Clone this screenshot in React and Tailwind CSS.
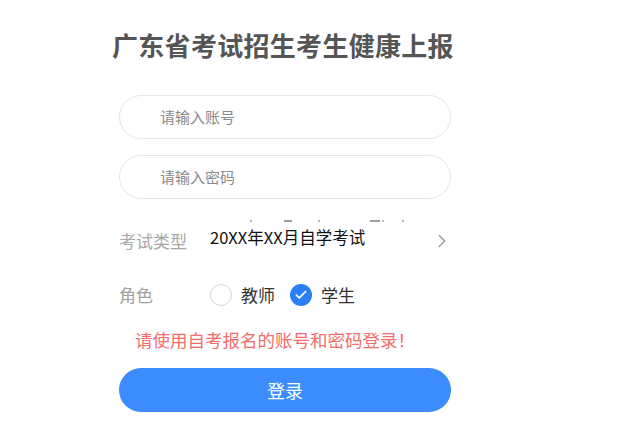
import { Check, ChevronRight } from "lucide-react";

const FONT = { fontFamily: '"Noto Sans CJK SC", "Noto Sans", sans-serif' };

function TextField({ placeholder, type = "text" }) {
  return (
    <div className="h-[44px] w-[332px] rounded-full border border-[#e6e6e6] bg-white flex items-center pl-[40px]">
      <input
        type={type}
        placeholder={placeholder}
        className="w-full bg-transparent text-[15px] text-[#333] placeholder:text-[#8a8a8a] outline-none"
        style={FONT}
      />
    </div>
  );
}

export default function App() {
  return (
    <div className="w-[640px] h-[429px] bg-white overflow-hidden" style={FONT}>
      <div className="w-[332px] ml-[119px] flex flex-col">
        {/* Title */}
        <h1 className="mt-[26px] -ml-[7px] text-[26px] leading-[38px] font-bold text-[#555] tracking-[0.3px] whitespace-nowrap">
          广东省考试招生考生健康上报
        </h1>

        {/* Account / password */}
        <div className="mt-[31px] flex flex-col gap-[16px]">
          <TextField placeholder="请输入账号" />
          <TextField placeholder="请输入密码" type="password" />
        </div>

        {/* Exam type (picker remnants above) */}
        <div className="mt-[20px] h-[3px] flex items-end">
          <span className="ml-[131px] w-[2px] h-[2px] bg-[#b5b5b5]" />
          <span className="ml-[32px] w-[8px] h-[2px] bg-[#a0a0a0]" />
          <span className="ml-[26px] w-[2px] h-[2px] bg-[#b5b5b5]" />
          <span className="ml-[50px] w-[10px] h-[2px] bg-[#a0a0a0]" />
          <span className="ml-[2px] w-[2px] h-[2px] bg-[#c0c0c0]" />
          <span className="ml-[18px] w-[2px] h-[2px] bg-[#b5b5b5]" />
        </div>
        <div className="mt-[2px] flex items-center h-[28px]">
          <span className="w-[91px] text-[17px] text-[#a8a8a8] mt-[6px]">考试类型</span>
          <span className="flex-1 text-[16.5px] text-[#111] -mt-[2px]">20XX年XX月自学考试</span>
          <ChevronRight className="w-[22px] h-[22px] text-[#999] -mr-[2px] mt-[6px]" strokeWidth={1.5} />
        </div>

        {/* Role */}
        <div className="mt-[29px] flex items-center h-[28px]">
          <span className="w-[91px] text-[17px] text-[#a0a0a0]">角色</span>
          <label className="flex items-center">
            <span className="w-[22px] h-[22px] rounded-full border border-[#d5d5d5] bg-white" />
            <span className="ml-[9px] text-[17px] text-[#333]">教师</span>
          </label>
          <label className="flex items-center ml-[15px]">
            <span className="w-[22px] h-[22px] rounded-full bg-[#2b7ff5] flex items-center justify-center">
              <Check className="w-[14px] h-[14px] text-white" strokeWidth={3} />
            </span>
            <span className="ml-[9px] text-[17px] text-[#333]">学生</span>
          </label>
        </div>

        {/* Hint */}
        <p className="mt-[19px] ml-[16px] text-[17.5px] leading-[24px] text-[#f56c6c] whitespace-nowrap">
          请使用自考报名的账号和密码登录！
        </p>

        {/* Login button */}
        <button className="mt-[16px] h-[44px] w-[332px] rounded-full bg-[#3c8cfd] text-white text-[18px]">
          登录
        </button>
      </div>
    </div>
  );
}
